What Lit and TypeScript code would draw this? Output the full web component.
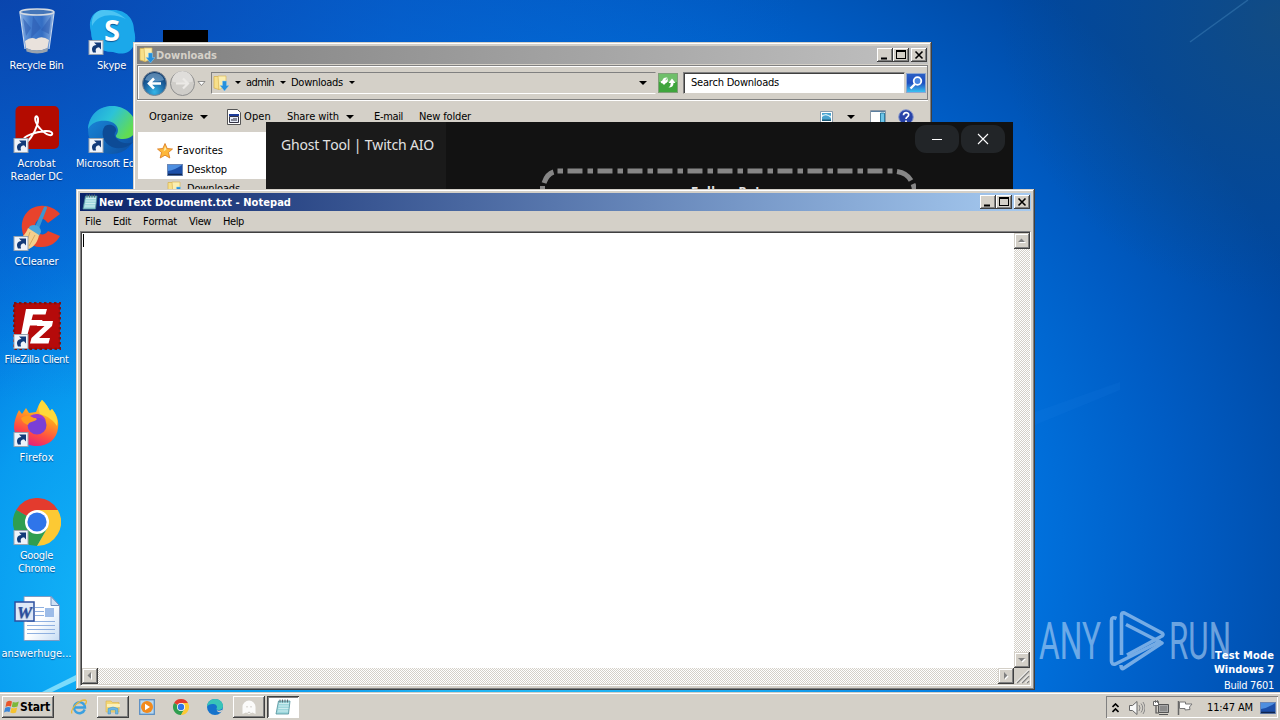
import { LitElement, html, css, svg } from "lit";
import { customElement, property } from "lit/decorators.js";

/* A single line of text whose tracking is adjusted to fill a given width. */
@customElement("fit-text")
class FitText extends LitElement {
  @property({ type: Number }) w = 0;
  static styles = css`
    :host { display: block; white-space: nowrap; flex: none; }
    .t { display: inline-block; font-kerning: none; }
  `;
  firstUpdated() {
    const t = this.renderRoot.querySelector(".t") as HTMLElement;
    const n = (this.textContent || "").trim().length;
    const natural = t.getBoundingClientRect().width;
    t.style.letterSpacing = `${(this.w - natural) / n}px`;
    this.style.width = `${this.w}px`;
  }
  render() {
    return html`<span class="t"><slot></slot></span>`;
  }
}

const shortcut = svg`
  <rect x="1" y="32.500" width="14" height="14" fill="#eef3fa" stroke="#9aa4b0"/>
  <path d="M5 44.500c-2-4-1-7 3.500-7.500l-2.500-2.500h7v7l-2-2.200c-3 .4-4 2-3 5.200z" fill="#123a78"/>`;

const icons: Record<string, unknown> = {
  bin: svg`
    <defs><linearGradient id="b1" x1="0" x2="1"><stop offset="0" stop-color="#9fc3ec"/><stop offset=".3" stop-color="#4f86d2"/><stop offset=".65" stop-color="#3b74c6"/><stop offset="1" stop-color="#a4c4ea"/></linearGradient></defs>
    <path d="M7 3h34l-5.500 38q-11 6-23 0z" fill="url(#b1)" opacity=".85"/>
    <path d="M10 10l8 10-5 8zM38 8L28 22l8 4zM20 8l8 12-10 10z" fill="#2b5bb0" opacity=".55"/>
    <path d="M12 33q6-5 11-2 6-4 13 1l-1.500 8q-11 5-21.500 0z" fill="#e9e2dc"/>
    <path d="M13 40q11 5 22 0l-.5 3.500q-10 4-21 0z" fill="#9aa3ad"/>
    <ellipse cx="24" cy="4" rx="17" ry="3" fill="#4576b8" stroke="#d5dbe2" stroke-width="1.600"/>
    <path d="M7 5l5 36M41 5l-5 36" stroke="#c4d6ee" stroke-width="1.200"/>`,
  skype: svg`
    <path d="M14 2h12c12 0 20 9 20 20 3 10 0 19-6 22-6 3-12 1-15 0C11 44 3 36 3 24 0 14 3 4 14 2z" fill="#1ba8ea"/>
    <path d="M4 18C3 8 8 2 16 2c10 0 16 4 22 9-12-6-28-6-34 7z" fill="#4cc4f3"/>
    <text x="24" y="33" text-anchor="middle" font-family="Open Sans" font-weight="700" font-size="29" fill="#fff">S</text>${shortcut}`,
  acrobat: svg`
    <rect x="2.500" y="0" width="43.500" height="43" rx="5" fill="#b30b00"/>
    <path d="M12 33c1-4 12-8 22-9 6-.5 8 2 7 3.500-2 2-8-1-12-6-4-4-6-10-4-12 2-1 3 4 1 9-3 9-9 17-12 17-2 0-2-1-2-2.500z" transform="translate(-2 1)" fill="none" stroke="#fff" stroke-width="2"/>${shortcut}`,
  edge: svg`
    <defs><linearGradient id="e1" x1="0" y1="0" x2="1" y2=".5"><stop offset="0" stop-color="#1d9ae0"/><stop offset=".5" stop-color="#2cc3d8"/><stop offset="1" stop-color="#62dc52"/></linearGradient>
    <linearGradient id="e2" x1="0" y1="0" x2="1" y2="1"><stop offset="0" stop-color="#1b8ee0"/><stop offset="1" stop-color="#0c4a9c"/></linearGradient></defs>
    <circle cx="24" cy="24" r="24" fill="url(#e2)"/>
    <path d="M0 23C1 9 11 0 24 0c14 0 24 10 24 21 0 8-6 12-13 12-5 0-9-2-6-5 3-5-1-12-9-13C11 14 4 16 0 23z" fill="url(#e1)"/>
    <path d="M17 20c-5 6-2 17 7 21 8 3 17 0 21-5-4 2-12 2-16-3-3-3-3-5-1-8 1-5-6-8-11-5z" fill="#0d4b96"/>${shortcut}`,
  ccleaner: svg`
    <path d="M47 10C42 4 34 1 27 2 15 3 8 13 9 25s10 19 20 18c8 0 14-4 18-11l-12-5c-2 3-5 4-8 3-4-1-6-5-5-9 1-5 6-8 10-5l3 3z" fill="#e8432c"/>
    <path d="M31 3c2-1 3 0 3 1L25 27l-4-2z" fill="#3d96d0"/>
    <path d="M17 22c6-3 11 1 11 6l-2 4-11-7z" fill="#4aa6da"/>
    <path d="M15 24l11 7c-1 6-4 11-10 14-6-1-11-5-14-9 6-1 11-6 13-12z" fill="#f3cf8c"/>
    <path d="M17 28l-4 12M22 31l-6 11" stroke="#d9a95c"/>${shortcut}`,
  filezilla: svg`
    <rect x="1" y="1" width="46" height="46" fill="#b50a0a"/>
    <rect x="1" y="1" width="46" height="46" fill="none" stroke="#7c1212" stroke-width="2.500" stroke-dasharray="2.500 2.500"/>
    <path d="M13 7h21l-1.500 5.500H20L18.500 18h11L28 23.500H17L13 38H7z" fill="#fff"/>
    <path d="M25 19h15l-1 5-13 12h11l-1.500 5.500H17L18.500 36l13-12H24z" fill="#fff"/>${shortcut}`,
  firefox: svg`
    <defs><linearGradient id="f1" x1=".8" y1="0" x2=".4" y2="1"><stop offset="0" stop-color="#fff04a"/><stop offset=".4" stop-color="#ff9e20"/><stop offset=".75" stop-color="#ff4a45"/><stop offset="1" stop-color="#e5227a"/></linearGradient></defs>
    <path d="M29 0c4 4 6 7 8 11l2-2c5 6 7 12 6 19-1 11-10 18-21 18S2 39 1 28c0-7 2-12 5-18l3 4 4-6 3 5 7-1c2-5 3-9 6-12z" fill="url(#f1)"/>
    <path d="M29 0c4 4 6 7 8 11l2-2c5 6 6 12 5 17-3-5-9-10-17-12-2-5-1-10 2-14z" fill="#ffd93a"/>
    <circle cx="24" cy="25" r="9.500" fill="#7a3fd6"/>
    <path d="M8 18c6-4 12-2 16 1-2 3-8 2-9 6-3-1-6-3-7-7z" fill="#ff9a1e"/>
    <path d="M17 16c6-4 14-2 16 5-4-4-9-3-12-3z" fill="#9a3ad0"/>${shortcut}`,
  chrome: svg`
    <path d="M24 24L3.200 12A24 24 0 0 1 44.800 12z" fill="#e33b2e"/>
    <path d="M24 24L3.200 12A24 24 0 0 0 24 48L34.400 30z" fill="#2f9e4f"/>
    <path d="M24 12H44.800A24 24 0 0 1 24 48L34.400 30z" fill="#fcc934"/>
    <circle cx="24" cy="24" r="12" fill="#fff"/><circle cx="24" cy="24" r="9.600" fill="#2f75ea"/>`,
  word: svg`
    <defs><linearGradient id="w1" x1="0" y1="0" x2="1" y2="1"><stop offset=".5" stop-color="#fff"/><stop offset="1" stop-color="#c6dcf4"/></linearGradient></defs>
    <path d="M11 .5h27l8.500 9V44.500H11z" fill="url(#w1)" stroke="#7f9cc4"/>
    <path d="M38 .5v9h8.500z" fill="#cfe0f4" stroke="#6f8fc0"/>
    <path d="M22 11.500h9M22 15.500h9M22 19.500h9M14 25.500h28M14 29.500h28M14 33.500h28M14 37.500h28" stroke="#8fb0e0"/>
    <rect x="32" y="12" width="9" height="9" fill="#9dbce8"/>
    <rect x="2" y="6" width="19" height="19" fill="#dfe9f8" stroke="#2c4fa0" stroke-width="1.500"/>
    <text x="11.500" y="21.500" text-anchor="middle" font-family="Liberation Serif" font-weight="700" font-style="italic" font-size="17" fill="#2c4fa0">W</text>`,
};
const big = (k: string) => html`<svg class="big" viewBox="0 0 48 48">${icons[k]}</svg>`;

const folder = html`<svg class="s16" viewBox="0 0 16 16"><path d="M1 1.500h5v13l-5-1.500z" fill="#f7e08a" stroke="#d5b04a" stroke-width=".7"/><path d="M5 1h8v11l-7 2.500z" fill="#fbeeb0" stroke="#dcb95a" stroke-width=".7"/><path d="M9.500 6h4v4.500H16L11.500 16 7 10.500h2.500z" fill="#2590dd" stroke="#8ccbf3" stroke-width=".5"/></svg>`;
const notepad = html`<svg class="s16" viewBox="0 0 16 16"><path d="M3.500 2H15l-1.500 13H1z" fill="#9ed8dd" stroke="#4f8f99" stroke-width=".8"/><path d="M4 4.500h10M3.700 7h10M3.400 9.500h10M3 12h10" stroke="#d9f3f4" stroke-width=".8"/><path d="M5 .5v3M7.500 .5v3M10 .5v3M12.500 .5v3" stroke="#5b6e75"/></svg>`;
const monitor = html`<svg class="s16" viewBox="0 0 16 16"><rect x=".5" y="2.500" width="15" height="11" fill="#1c4fa8" stroke="#6b87b5"/><path d="M1 9q7-1 14-6v0H1z" fill="#4e8fe0"/><path d="M1 12.500h14" stroke="#0e2550" stroke-width="1.500"/></svg>`;
const arrow = html`<svg class="arr" viewBox="0 0 8 4"><path d="M0 0h8L4 4z"/></svg>`;
const sarrow = html`<svg class="sarr" viewBox="0 0 6 3"><path d="M0 0h6L3 3z"/></svg>`;
const caption = html`<div class="cap">
  <div class="cb"><svg viewBox="0 0 16 14"><path d="M4 9.500h6v2H4z"/></svg></div>
  <div class="cb"><svg viewBox="0 0 16 14"><path d="M3 2h10v9H3zM4 4v6h8V4z" fill-rule="evenodd"/></svg></div>
  <div class="cb x"><svg viewBox="0 0 16 14"><path d="M4.500 3.500l7 7M11.500 3.500l-7 7" stroke="#000" stroke-width="1.600"/></svg></div>
</div>`;
const sb = (d: string) => html`<div class="sb"><svg viewBox="0 0 16 16"><path d=${d} transform="translate(1 1)" fill="#fff"/><path d=${d} fill="#808080"/></svg></div>`;

@customElement("app-root")
class AppRoot extends LitElement {
  static styles = css`
    :host { display: block; width: 1280px; height: 720px; overflow: hidden;
      font: 11px/14px "DejaVu Sans Condensed", "DejaVu Sans", sans-serif; color: #000; }
    * { box-sizing: border-box; }
    svg { display: block; flex: none; }
    .screen { position: relative; width: 1280px; height: 720px; display: flex; flex-direction: column; overflow: hidden; }
    .desk { flex: 1; position: relative; min-height: 0; }
    .wall { position: absolute; inset: 0; width: 1280px; height: 692px; }
    .icons { position: relative; display: grid; grid-template-rows: repeat(7, 98px); grid-auto-flow: column;
      grid-auto-columns: 75px; width: 150px; margin-left: -1px; padding-top: 8px; }
    .ic { display: flex; flex-direction: column; align-items: center; color: #fff; text-shadow: 0 1px 1px rgba(0,30,90,.6); line-height: 13px; }
    .big { width: 48px; height: 48px; margin: 0 0 3px 1px; }
    .s16 { width: 16px; height: 16px; }
    .arr { width: 8px; height: 4px; } .sarr { width: 6px; height: 3px; }
    .black { position: absolute; left: 163px; top: 30px; width: 45px; height: 14px; background: #000; }
    .win { position: absolute; background: #d4d0c8; display: flex; flex-direction: column; padding: 4px;
      box-shadow: inset -1px -1px #404040, inset 1px 1px #d4d0c8, inset -2px -2px #808080, inset 2px 2px #fff; }
    .explorer { left: 133px; top: 42px; width: 799px; height: 560px; }
    .np { left: 76px; top: 189px; width: 959px; height: 501px; }
    .tb { height: 18px; display: flex; align-items: center; padding: 0 1px 0 2px; color: #fff; font-weight: 700; flex: none; }
    .tb .s16 { margin-right: 1px; }
    .tb fit-text { padding-top: 1px; }
    .explorer .tb { background: linear-gradient(90deg, #808080, #c0c0c0); color: #d4d0c8; }
    .np .tb { background: linear-gradient(90deg, #0a246a, #a6caf0); }
    .cap { margin-left: auto; display: flex; }
    .cb { width: 16px; height: 14px; background: #d4d0c8;
      box-shadow: inset -1px -1px #404040, inset 1px 1px #fff, inset -2px -2px #808080; }
    .cb svg { width: 16px; height: 14px; } .cb.x { margin-left: 2px; }
    .nav { height: 35px; margin-top: 1px; display: flex; align-items: center; padding: 0 1px 0 4px; flex: none;
      border: 1px solid #808080; box-shadow: inset 1px 1px #fff, 0 1px #fff; }
    .rounds { width: 66px; height: 30px; margin-right: 3px; }
    .addr { width: 445px; height: 22px; border: 1px solid; border-color: #808080 #d4d0c8 #fff #808080; display: flex; align-items: center; padding-left: 1px; }
    .addr .arr { margin-left: auto; margin-right: 8px; }
    .addr .sarr { margin: 0 5px 0 6px; }
    .sq { width: 20px; height: 20px; }
    .go { margin: 0 5px 0 2px; }
    .search { width: 222px; height: 22px; background: #fff; border: 1px solid; border-color: #808080 #d4d0c8 #d4d0c8 #808080;
      box-shadow: inset 1px 1px #404040; padding: 3px 0 0 7px; margin-right: 1px; }
    .cmd { height: 32px; display: flex; align-items: center; gap: 16px; padding: 1px 14px 0 12px; flex: none; }
    .grp { display: flex; align-items: center; gap: 7px; min-width: 0; }
    .grp.arrow { padding-right: 3px; } .grp.open { gap: 3px; }
    .mail { margin: 0 0 0 1px; }
    .views { margin-left: auto; display: flex; align-items: center; }
    .views .arr { margin: 0 15px 0 14px; }
    .views .help { margin-left: 12px; }
    .side { flex: 1; background: #fff; margin-left: 1px; padding-top: 9px; display: flex; flex-direction: column; }
    .row { height: 19px; display: flex; align-items: center; gap: 4px; padding-left: 29px; flex: none; }
    .row.fav { padding-left: 19px; }
    .row.sel { background: #d4d0c8; }
    .ghost { position: absolute; left: 266px; top: 122px; width: 747px; height: 480px; background: #121212; display: flex; color: #e2e2e2; }
    .gl { width: 180px; background: #1a1a1a; padding: 14px 0 0 15px; font: 14px/18px "Noto Sans", sans-serif; }
    .gr { flex: 1; display: flex; flex-direction: column; }
    .gb { display: flex; justify-content: flex-end; gap: 2px; padding: 3px 8px 0 0; height: 46px; }
    .gbtn { width: 44px; height: 28px; border-radius: 11px; background: #222528; }
    .gframe { width: 376px; height: 60px; margin-left: 94px; padding: 17px 0 0 151px; font-size: 12px; font-weight: 700; position: relative; }
    .gframe svg { position: absolute; left: 0; top: 0; }
    .menu { height: 20px; display: flex; gap: 12px; padding: 4px 0 0 5px; flex: none; line-height: 13px; }
    .edit { flex: 1; display: grid; grid-template-columns: 1fr 16px; grid-template-rows: 1fr 16px; border: 1px solid;
      border-color: #808080 #fff #fff #808080; padding: 1px 0 1px 1px; box-shadow: inset 1px 1px #404040, inset 0 -1px #d4d0c8; }
    .area { background: #fff; padding: 1px 0 0 1px; }
    .caret { width: 1px; height: 13px; background: #000; }
    .sb { width: 16px; height: 16px; background: #d4d0c8; box-shadow: inset -1px -1px #404040, inset 1px 1px #d4d0c8, inset -2px -2px #808080, inset 2px 2px #fff; }
    .sb svg { width: 16px; height: 16px; }
    .track { display: flex; justify-content: space-between; background: repeating-conic-gradient(#fff 0 25%, #d4d0c8 0 50%) 0 0/2px 2px; }
    .track.v { flex-direction: column; }
    .grip svg { width: 16px; height: 16px; }
    .mark { position: absolute; left: 1036px; top: 606px; width: 210px; height: 74px; }
    .build { position: absolute; right: 6px; top: 649px; color: #fff; display: flex; flex-direction: column; align-items: flex-end; }
    .build b { display: block; } .build .last { margin-top: 2px; }
    .bar { height: 28px; background: #d4d0c8; box-shadow: inset 0 1px #d4d0c8, inset 0 2px #fff; display: flex; align-items: center; padding: 3px 2px 1px; flex: none; position: relative; }
    .start { width: 52px; height: 22px; display: flex; align-items: center; padding-left: 2px; font-weight: 700; font-size: 12px; margin-right: 9px; }
    .raised { box-shadow: inset -1px -1px #404040, inset 1px 1px #fff, inset -2px -2px #808080; }
    .q { width: 32px; height: 22px; margin-right: 2px; display: flex; align-items: center; justify-content: center; }
    .pressed { background: #fff; box-shadow: inset 1px 1px #404040, inset -1px -1px #fff, inset 2px 2px #808080; }
    .tray { margin-left: auto; width: 172px; height: 22px; display: flex; align-items: center; box-shadow: inset 1px 1px #808080, inset -1px -1px #fff; padding: 1px 2px 0 6px; }
    .tray svg { margin-right: 8px; } .tray .chev { width: 7px; height: 10px; margin-right: 10px; }
    .tray .clock { margin: 0 7px 0 6px; } .tray .s16:last-child { margin-right: 0; }
  `;

  ic(k: string, ...lines: [string, number][]) {
    return html`<div class="ic">${big(k)}${lines.map(([t, w]) => html`<fit-text .w=${w}>${t}</fit-text>`)}</div>`;
  }

  wall() {
    return html`<svg class="wall" viewBox="0 0 1280 692" preserveAspectRatio="none">
      <defs>
        <radialGradient id="g" gradientUnits="userSpaceOnUse" cx="0" cy="0" r="1" gradientTransform="translate(480 560) scale(880 740)">
          <stop offset="0" stop-color="#2cc4f8"/><stop offset=".35" stop-color="#1aa8f0"/><stop offset=".62" stop-color="#0072de"/>
          <stop offset=".8" stop-color="#005cc4"/><stop offset="1" stop-color="#0047a0"/></radialGradient>
        <radialGradient id="l" gradientUnits="userSpaceOnUse" cx="0" cy="0" r="1" gradientTransform="translate(110 620) scale(330 480)">
          <stop offset="0" stop-color="#14b6f8"/><stop offset=".45" stop-color="#08a0f2" stop-opacity=".85"/><stop offset="1" stop-color="#0078e0" stop-opacity="0"/></radialGradient>
        <radialGradient id="t" gradientUnits="userSpaceOnUse" cx="0" cy="0" r="1" gradientTransform="translate(0 0) scale(800 400)"><stop offset="0" stop-color="#0a45ae" stop-opacity=".95"/><stop offset=".5" stop-color="#0a58c8" stop-opacity=".5"/><stop offset="1" stop-color="#0a60d0" stop-opacity="0"/></radialGradient>
        <radialGradient id="c" gradientUnits="userSpaceOnUse" cx="1280" cy="20" r="280"><stop offset="0" stop-color="#144c80" stop-opacity=".9"/><stop offset="1" stop-color="#0a4a88" stop-opacity="0"/></radialGradient>
      </defs>
      <rect width="1280" height="692" fill="url(#g)"/>
      <rect width="440" height="692" fill="url(#l)"/>
      <rect width="1280" height="692" fill="url(#t)"/>
      <rect width="1280" height="692" fill="url(#c)"/>
      <path d="M1190 42L1248 0" stroke="#3d80b8" stroke-width="1.500" opacity=".5"/>
      <path d="M42 692L80 673v6L52 692z" fill="#8fe4fb" opacity=".85"/>
      <path d="M1035 425l85-35v-8l-85 30z" fill="#2a8cf0" opacity=".1"/>
    </svg>`;
  }

  explorer() {
    return html`<section class="win explorer">
      <div class="tb">${folder}<fit-text .w=${61}>Downloads</fit-text>${caption}</div>
      <div class="nav">
        <svg class="rounds" viewBox="0 0 66 30">
          <defs><radialGradient id="n1" cx=".5" cy=".85" r=".8"><stop offset="0" stop-color="#35b6e8"/><stop offset=".6" stop-color="#1b5f9c"/><stop offset="1" stop-color="#0d3a6c"/></radialGradient></defs>
          <circle cx="12.500" cy="15.500" r="12" fill="url(#n1)" stroke="#7d8794"/>
          <path d="M3 12a10 10 0 0 1 19 0q-9 3-19 0z" fill="#9cc4e4" opacity=".5"/>
          <path d="M19 15.500H8M12 10.500l-5 5 5 5" fill="none" stroke="#fff" stroke-width="2.600"/>
          <circle cx="40.500" cy="15.500" r="12" fill="#cfcdc9" stroke="#8e8e8e"/><path d="M30 13.500a10.500 10.500 0 0 1 21 0q-10 3-21 0z" fill="#dfddda"/>
          <path d="M34 15.500h11M41 10.500l5 5-5 5" fill="none" stroke="#ebe9e6" stroke-width="2.200"/>
          <path d="M56 13.500h7l-3.500 4z" fill="#fff" stroke="#777" stroke-width=".8"/>
        </svg>
        <div class="addr">${folder}${sarrow}<fit-text .w=${28}>admin</fit-text>${sarrow}<fit-text .w=${52}>Downloads</fit-text>${sarrow}${arrow}</div>
        <svg class="sq go" viewBox="0 0 20 20"><rect x=".5" y=".5" width="19" height="19" fill="#3fa53c" stroke="#7f9f78"/><rect x="1" y="1" width="18" height="8" fill="#8fd088" opacity=".6"/><path d="M2.500 10L6 5.500V8q3-.5 3.500-3 1.500 5-3.500 5.500v0zM17.500 10L14 5.500 10.500 10h2.300q0 3-2.300 4.500 5 0 5-4.500z" fill="#fff"/><path d="M2.500 8L6 12l3.500-4H7.300q0-2 2.200-3.500-5-.5-5 3.500z" fill="#fff"/></svg>
        <div class="search"><fit-text .w=${88}>Search Downloads</fit-text></div>
        <svg class="sq" viewBox="0 0 20 20"><defs><linearGradient id="sg" x2="0" y2="1"><stop offset="0" stop-color="#2b5fc4"/><stop offset=".5" stop-color="#1f4fc0"/><stop offset="1" stop-color="#3cc8f4"/></linearGradient></defs><rect x=".5" y=".5" width="19" height="19" fill="url(#sg)" stroke="#8ea6d0"/><circle cx="11.500" cy="8" r="3.800" fill="#4a86e0" stroke="#fff" stroke-width="1.800"/><path d="M9 11l-4.500 4.500" stroke="#fff" stroke-width="2.400"/></svg>
      </div>
      <div class="cmd">
        <div class="grp arrow"><fit-text .w=${44}>Organize</fit-text>${arrow}</div>
        <div class="grp open"><svg width="14" height="16" viewBox="0 0 14 16"><path d="M.5.5h10l3 3v12H.5z" fill="#fff" stroke="#555"/><path d="M2 5h10v2H2z" fill="#1c3c9c"/><path d="M2.500 7.500h9v6h-9z" fill="#e6ecf8" stroke="#334"/><path d="M4 11h2M7 9v3M9 9v3" stroke="#223"/></svg><fit-text .w=${27}>Open</fit-text></div>
        <div class="grp arrow"><fit-text .w=${52}>Share with</fit-text>${arrow}</div>
        <fit-text class="mail" .w=${29}>E-mail</fit-text>
        <fit-text .w=${52}>New folder</fit-text>
        <div class="views">
          <svg width="13" height="12" viewBox="0 0 13 12"><path d="M.5.500h12v11H.5z" fill="#fff" stroke="#8a9cac"/><path d="M2 2h9v8H2z" fill="#4aa3cf"/><path d="M2 6q4-4 9 1V5L6 3 2 4z" fill="#d8f0f8"/><path d="M2 8.500h9V10H2z" fill="#1b5a78"/></svg>
          ${arrow}
          <svg width="16" height="14" viewBox="0 0 16 14"><path d="M.5.5h15v15H.5z" fill="#fff" stroke="#8a97a4"/><path d="M1 1.500h14" stroke="#5a7fa0"/><path d="M10.500 3h4v11h-4z" fill="#6cc4e8" stroke="#2d7fa4"/></svg>
          <svg class="help" width="16" height="16" viewBox="0 0 16 16"><circle cx="8" cy="8" r="7.300" fill="#2843a8" stroke="#8898cc"/><path d="M5.500 6.200c0-3.500 5.200-3.300 5.200-.4C10.700 8 8 7.800 8 10M8 11.500v1.500" fill="none" stroke="#fff" stroke-width="1.700"/></svg>
        </div>
      </div>
      <div class="side">
        <div class="row fav"><svg class="s16" viewBox="0 0 16 16"><path d="M8 .5l2.200 5 5.300.5-4 3.500 1.300 5.500L8 12.200 3.200 15l1.300-5.500L.5 6l5.300-.5z" fill="#fdb73a" stroke="#d9771c" stroke-width=".8"/><path d="M8 3l1.500 3.500-3 2z" fill="#ffe9a0"/></svg><fit-text .w=${46}>Favorites</fit-text></div>
        <div class="row">${monitor}<fit-text .w=${40}>Desktop</fit-text></div>
        <div class="row sel">${folder}<fit-text .w=${53}>Downloads</fit-text></div>
      </div>
    </section>`;
  }

  ghost() {
    return html`<section class="ghost">
      <div class="gl"><fit-text .w=${153}>Ghost Tool | Twitch AIO</fit-text></div>
      <div class="gr">
        <div class="gb">
          <div class="gbtn"><svg width="44" height="28"><path d="M17 14.500h10" stroke="#fff"/></svg></div>
          <div class="gbtn"><svg width="44" height="28"><path d="M17 9l10 10M27 9l-10 10" stroke="#fff" stroke-width="1.100"/></svg></div>
        </div>
        <div class="gframe">
          <svg width="376" height="60"><g fill="none" stroke="#868686" stroke-width="5">
            <path d="M17.500 3h335" stroke-dasharray="5.500 4.500 15 5" />
            <path d="M4 15Q7 6 13.500 4M357 3.500Q367 5 371 12.500M373 16q1.500 3 1.500 8M2.500 18v8"/></g></svg>
          <fit-text .w=${77}>Follow Bots</fit-text>
        </div>
      </div>
    </section>`;
  }

  notepad() {
    return html`<section class="win np">
      <div class="tb">${notepad}<fit-text .w=${192}>New Text Document.txt - Notepad</fit-text>${caption}</div>
      <div class="menu">
        <fit-text .w=${16}>File</fit-text><fit-text .w=${18}>Edit</fit-text><fit-text .w=${34}>Format</fit-text><fit-text .w=${22}>View</fit-text><fit-text .w=${21}>Help</fit-text>
      </div>
      <div class="edit">
        <div class="area"><div class="caret"></div></div>
        <div class="track v">${sb("M4 9h7L7.500 5.500z")}${sb("M4 6h7L7.500 9.500z")}</div>
        <div class="track">${sb("M9 4v7L5.500 7.500z")}${sb("M6 4v7l3.500-3.500z")}</div>
        <div class="grip"><svg viewBox="0 0 16 16"><path d="M3 15L15 3M8 15l7-7M13 15l2-2" stroke="#808080" stroke-width="1.400"/><path d="M1.500 15L15 1.500M6.500 15L15 6.500M11.500 15l3.500-3.500" stroke="#fff"/></svg></div>
      </div>
    </section>`;
  }

  taskbar() {
    const s = (k: string) => html`<svg class="s16" viewBox="0 0 48 48">${icons[k]}</svg>`;
    return html`<footer class="bar">
      <div class="start raised"><svg class="s16" viewBox="0 0 16 16"><path d="M2.500 3q3-2 5.500-.5L7 7.500Q4 6.500 1.500 8z" fill="#e8562a"/><path d="M8.800 3q3 1 6-.5L13.500 7.500q-3 1.500-5.700.3z" fill="#7cb83a"/><path d="M1.200 8.800q3-1.300 5.500-.3L5.500 13q-3-1-5.500.5z" fill="#3a86d8"/><path d="M7.500 8.800q3 1.200 5.700-.2l-1.200 4.900q-3 1.500-5.700 0z" fill="#f5c230"/></svg><fit-text .w=${30}>Start</fit-text></div>
      <div class="q"><svg class="s16" viewBox="0 0 16 16"><path d="M13.700 10.500a5.500 5.500 0 1 1 .3-2H4" fill="none" stroke="#3ba0e0" stroke-width="2.400"/><path d="M1 14.500C-1 11 7 1 14 1c2.500.5 1 3.500 0 4.500" fill="none" stroke="#e8b83a" stroke-width="1.300"/></svg></div>
      <div class="q raised"><svg class="s16" viewBox="0 0 16 16"><path d="M1 2h5l1.500 1.500H14V13H1z" fill="#f3d775" stroke="#d8b04a" stroke-width=".6"/><path d="M2 5h13v3H2z" fill="#fbf0b8"/><path d="M3 15V9.500q5-3 10 0V15h-2.500v-4h-5v4z" fill="#6cb8e4" stroke="#3f8cc0" stroke-width=".5"/></svg></div>
      <div class="q"><svg class="s16" viewBox="0 0 16 16"><rect x=".7" y=".7" width="14.600" height="14.600" fill="#b8d8f0" stroke="#5a8fc4" stroke-width="1.300"/><circle cx="8" cy="8" r="6" fill="#f28a1c"/><path d="M6 4.800v6.400L11 8z" fill="#fff"/></svg></div>
      <div class="q">${s("chrome")}</div>
      <div class="q"><svg class="s16" viewBox="0 0 48 48"><circle cx="24" cy="24" r="24" fill="#1573cc"/><path d="M0 23C1 9 11 0 24 0c14 0 24 10 24 21 0 8-6 12-13 12-5 0-9-2-6-5 3-5-1-12-9-13C11 14 4 16 0 23z" fill="#38c4b8"/><path d="M29 33q6 5 17-1l-2 6q-12 5-15-5z" fill="#d4d0c8"/></svg></div>
      <div class="q raised"><svg class="s16" viewBox="0 0 16 16"><path d="M1.500 15V8a6.500 6.500 0 0 1 13 0v7l-3-1.500L8 15l-3-1.500z" fill="#fbfbfa"/><path d="M6 7v1.500M10 7v1.500M6.500 14q1.500-2 3 0" stroke="#c8c4be" fill="none"/></svg></div>
      <div class="q pressed">${notepad}</div>
      <div class="tray">
        <svg class="chev" viewBox="0 0 7 10"><path d="M.5 4l3-3 3 3M.5 9l3-3 3 3" fill="none" stroke="#000" stroke-width="1.600"/></svg>
        <svg class="s16" viewBox="0 0 16 16"><path d="M.5 5.500h3L8 1.500v13L3.500 10.500h-3z" fill="#f8f8f8" stroke="#666"/><path d="M10 5q2 3 0 6M12 3.500q3.500 4.500 0 9M14 2q4 6 0 12" fill="none" stroke="#888"/></svg>
        <svg class="s16" viewBox="0 0 16 16"><path d="M5.500 4.500h10v8h-10z" fill="#a8a8a8" stroke="#555"/><path d="M7 6h7v5H7z" fill="#8b8b8b"/><path d="M6 14.500h9" stroke="#555"/><path d="M3 5v8h3" fill="none" stroke="#555" stroke-width="1.200"/><path d="M.5 1.500h5v4h-5z" fill="#fff" stroke="#666"/><path d="M2.500 0v3M4.500 0v3" stroke="#666" stroke-width=".8"/></svg>
        <svg class="s16" viewBox="0 0 16 16"><path d="M1.500 1v14" stroke="#666" stroke-width="1.500"/><path d="M2.500 2h6v2h6.500l-2.500 3 .5 2.500-5 .5V8.500h-5.500z" fill="#fff" stroke="#777"/></svg>
        <fit-text class="clock" .w=${46}>11:47 AM</fit-text>${monitor}
      </div>
    </footer>`;
  }

  render() {
    return html`<main class="screen">
      <div class="desk">
        ${this.wall()}
        <div class="icons">
          ${this.ic("bin", ["Recycle Bin", 54])}
          ${this.ic("acrobat", ["Acrobat", 38], ["Reader DC", 52])}
          ${this.ic("ccleaner", ["CCleaner", 44])}
          ${this.ic("filezilla", ["FileZilla Client", 64])}
          ${this.ic("firefox", ["Firefox", 34])}
          <div class="ic"><svg class="big" viewBox="0 0 48 48">${icons.chrome}${shortcut}</svg><fit-text .w=${33}>Google</fit-text><fit-text .w=${37}>Chrome</fit-text></div>
          ${this.ic("word", ["answerhuge...", 70])}
          ${this.ic("skype", ["Skype", 29])}
          ${this.ic("edge", ["Microsoft Edge", 71])}
        </div>
        <div class="black"></div>
        ${this.explorer()} ${this.ghost()} ${this.notepad()}
        <svg class="mark" viewBox="1036 606 210 74">
          <g fill="#c4def8" opacity=".55" font-family="Roboto" font-weight="400" font-size="51">
            <text x="1039" y="659" textLength="62" lengthAdjust="spacingAndGlyphs">ANY</text>
            <text x="1169" y="659" textLength="62" lengthAdjust="spacingAndGlyphs">RUN</text></g>
          <g fill="none" stroke="#c4def8" opacity=".6" stroke-width="3.600" stroke-linejoin="round">
            <path d="M1116.500 618.500q-5-2-5 2V661q0 4 4 3L1161 641"/>
            <path d="M1121.500 655V615q0-3 3-2L1162 633q2 1.500 0 3L1127 655"/>
            <path d="M1126 624.500L1162 643 1124 668q-3 2-3-3"/></g>
        </svg>
        <div class="build"><b><fit-text .w=${59}>Test Mode</fit-text></b><b><fit-text .w=${60}>Windows 7</fit-text></b><fit-text class="last" .w=${50}>Build 7601</fit-text></div>
      </div>
      ${this.taskbar()}
    </main>`;
  }
}
